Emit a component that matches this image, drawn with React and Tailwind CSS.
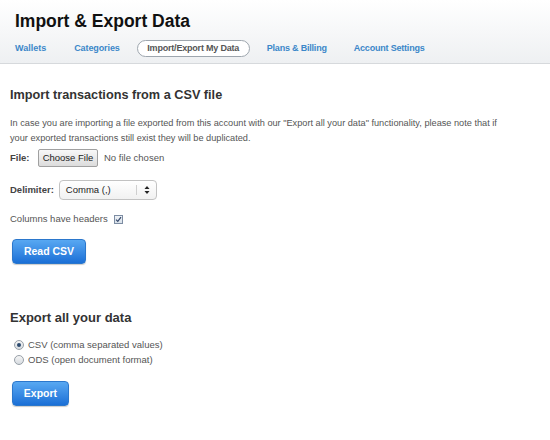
import React, { useState } from 'react'

const App = () => {
  const [format, setFormat] = useState('csv')
  const [headers, setHeaders] = useState(true)

  return (
    <div className="w-[550px] h-[440px] bg-white text-[#333] font-['Liberation_Sans',Arial,sans-serif] overflow-hidden">
      {/* Header */}
      <div className="h-[64px] bg-gradient-to-b from-white to-[#eef0f2] border-b border-[#d6d9dc] pl-[15px] pt-[10px]">
        <h1 className="text-[17.5px] font-bold leading-[22px] text-[#111]">Import &amp; Export Data</h1>
        <div className="flex items-center mt-[8px] text-[9px] font-bold text-[#3b87c9] h-[17px]">
          <a className="mr-[28px]">Wallets</a>
          <a className="mr-[17px] tracking-[-0.1px]">Categories</a>
          <a className="mr-[17px] w-[113px] h-[17px] flex items-center justify-center rounded-full border border-[#9ea6ae] bg-white text-[#555] tracking-[-0.2px]">
            Import/Export My Data
          </a>
          <a className="mr-[27px] tracking-[-0.2px]">Plans &amp; Billing</a>
          <a className="tracking-[-0.2px]">Account Settings</a>
        </div>
      </div>

      <div className="pl-[10px] pr-[10px]">
        {/* Import section */}
        <h2 className="text-[12.7px] font-bold text-[#333] mt-[22px] leading-[18px]">Import transactions from a CSV file</h2>
        <p className="text-[9.2px] text-[#555] leading-[15px] mt-[12px] max-w-[495px]">
          In case you are importing a file exported from this account with our "Export all your data" functionality, please note that if your exported transactions still exist they will be duplicated.
        </p>

        <div className="flex items-center mt-[3px] text-[9.5px] h-[18px]">
          <span className="font-bold text-[#444] w-[28px]">File:</span>
          <button className="h-[18px] w-[60px] border border-[#a0a0a0] rounded-[2px] bg-gradient-to-b from-[#f8f8f8] to-[#dcdcdc] text-[#222] text-[9.5px] leading-none">
            Choose File
          </button>
          <span className="ml-[6px] text-[#555]">No file chosen</span>
        </div>

        <div className="flex items-center mt-[13px] text-[9.5px]">
          <span className="font-bold text-[#444] mr-[5px]">Delimiter:</span>
          <div className="w-[98px] h-[20px] border border-[#c2c2c2] rounded-[4px] bg-gradient-to-b from-white to-[#f1f1f1] flex items-center pl-[6px] text-[#222]">
            <span className="flex-1">Comma (,)</span>
            <span className="h-[10px] border-l border-[#cfcfcf]"></span>
            <svg width="12" height="12" viewBox="0 0 12 12" className="ml-[4px] mr-[3px]">
              <path d="M3.5 5 L6 2 L8.5 5 Z" fill="#222" />
              <path d="M3.5 7 L6 10 L8.5 7 Z" fill="#222" />
            </svg>
          </div>
        </div>

        <div className="flex items-center mt-[13px] text-[9.5px] text-[#555] h-[12px]">
          <span>Columns have headers</span>
          <span
            onClick={() => setHeaders(!headers)}
            className="ml-[6px] w-[9px] h-[9px] border border-[#7d8da3] bg-gradient-to-b from-[#eef2f6] to-[#d9e1ea] flex items-center justify-center"
          >
            {headers && (
              <svg width="7" height="7" viewBox="0 0 7 7">
                <path d="M1 3.6 L2.8 5.4 L6 1.2" stroke="#34476a" strokeWidth="1.2" fill="none" />
              </svg>
            )}
          </span>
        </div>

        <button className="block mt-[14px] ml-[2px] w-[74px] h-[25px] rounded-[4px] bg-gradient-to-b from-[#58a8f2] to-[#1a6fd6] border border-[#2b77cc] text-white text-[10.5px] font-bold shadow-[0_1px_1px_rgba(0,0,0,0.2)]">
          Read CSV
        </button>

        {/* Export section */}
        <h2 className="text-[13px] font-bold text-[#333] mt-[45px] leading-[18px]">Export all your data</h2>
        <div className="mt-[10px] text-[9.5px] text-[#555] leading-[15px]">
          <label className="flex items-center" onClick={() => setFormat('csv')}>
            <span className="ml-[4px] w-[10px] h-[10px] rounded-full border border-[#98a0a8] bg-gradient-to-b from-[#f6f6f6] to-[#d6dbe0] flex items-center justify-center">
              {format === 'csv' && <span className="w-[4px] h-[4px] rounded-full bg-[#2c4a6e]"></span>}
            </span>
            <span className="ml-[4px]">CSV (comma separated values)</span>
          </label>
          <label className="flex items-center" onClick={() => setFormat('ods')}>
            <span className="ml-[4px] w-[10px] h-[10px] rounded-full border border-[#98a0a8] bg-gradient-to-b from-[#f6f6f6] to-[#d6dbe0] flex items-center justify-center">
              {format === 'ods' && <span className="w-[4px] h-[4px] rounded-full bg-[#2c4a6e]"></span>}
            </span>
            <span className="ml-[4px]">ODS (open document format)</span>
          </label>
        </div>

        <button className="block mt-[14px] ml-[2px] w-[57px] h-[25px] rounded-[4px] bg-gradient-to-b from-[#58a8f2] to-[#1a6fd6] border border-[#2b77cc] text-white text-[10.5px] font-bold shadow-[0_1px_1px_rgba(0,0,0,0.2)]">
          Export
        </button>
      </div>
    </div>
  )
}

export default App
